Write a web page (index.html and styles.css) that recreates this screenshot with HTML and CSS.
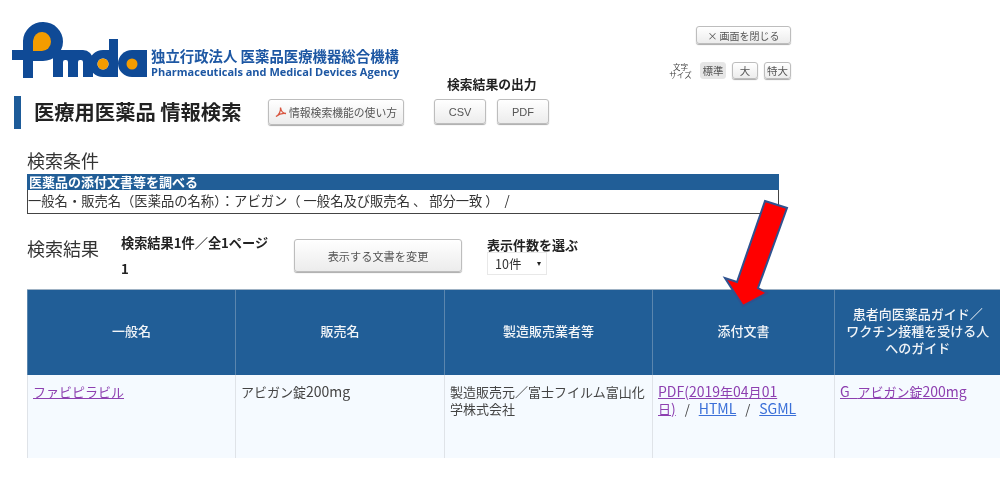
FILE: index.html
```html
<!DOCTYPE html>
<html lang="ja">
<head>
<meta charset="utf-8">
<title>医療用医薬品 情報検索</title>
<link rel="stylesheet" href="styles.css">
</head>
<body>
<div class="page">
  <header class="top">
    <div class="left">
      <div class="brand">
        <svg class="logo" viewBox="12 22 136 56" width="136" height="56" role="img" aria-label="Pmda">
          <path fill="#0f4a96" d="M12 50h11v-9a20 19.500 0 1 1 20 20h-10v17H23V60H12z"/>
          <path fill="#0f4a96" d="M53 50h30a10 10 0 0 1 10 10v17H83V62a2 2 0 0 0-2-2h-1a2 2 0 0 0-2 2v15H68V62a2 2 0 0 0-2-2h-1a2 2 0 0 0-2 2v15H53z"/>
          <path fill="#0f4a96" fill-rule="evenodd" d="M118 39v38h-15a14 13.500 0 1 1 0-27h6V39zM103 58.500a5.500 5.500 0 1 0 .01 0z"/>
          <path fill="#0f4a96" d="M132 50h15v27h-15a14 13.500 0 1 1 0-27z"/>
          <path fill="#f39c00" d="M33 50v-9a9 9.500 0 1 1 9 10h-9z"/>
          <circle cx="103" cy="64" r="5.500" fill="#f39c00"/>
          <circle cx="132" cy="64" r="5.500" fill="#f39c00"/>
        </svg>
        <div class="agency">
          <div class="agency-ja">独立行政法人 医薬品医療機器総合機構</div>
          <div class="agency-en">Pharmaceuticals and Medical Devices Agency</div>
        </div>
      </div>
      <div class="title-row">
        <h1 class="title">医療用医薬品 情報検索</h1>
        <a class="btn btn-help">
          <svg class="pdf-icon" viewBox="0 0 12 12" width="12" height="12"><path fill="none" stroke="#d8553f" stroke-width="1.300" d="M1 10.500C4 9 6 5 5.500 1.500 6 5 8 7.500 11 7.500 8 7 4 8 1 10.500z"/></svg>情報検索機能の使い方
        </a>
      </div>
    </div>
    <div class="output">
      <div class="output-label">検索結果の出力</div>
      <div class="output-btns">
        <a class="btn btn-out">CSV</a>
        <a class="btn btn-out">PDF</a>
      </div>
    </div>
    <div class="tools">
      <a class="btn btn-close">× 画面を閉じる</a>
      <div class="sizes">
        <span class="size-label">文字<br>サイズ</span>
        <a class="btn btn-size is-current">標準</a>
        <a class="btn btn-size">大</a>
        <a class="btn btn-size">特大</a>
      </div>
    </div>
  </header>

  <section class="cond">
    <h2 class="heading cond-heading">検索条件</h2>
    <div class="cond-box">
      <div class="cond-head">医薬品の添付文書等を調べる</div>
      <div class="cond-body">一般名・販売名（医薬品の名称）：アビガン（ 一般名及び販売名 、 部分一致 ） &nbsp;/</div>
    </div>
  </section>

  <section class="result-bar">
    <h2 class="heading result-heading">検索結果</h2>
    <div class="result-count">
      <div>検索結果1件／全1ページ</div>
      <div class="result-page">1</div>
    </div>
    <a class="btn btn-change">表示する文書を変更</a>
    <div class="per-page">
      <div class="per-label">表示件数を選ぶ</div>
      <div class="select">10件<span class="caret"></span></div>
    </div>
  </section>

  <table class="results">
    <colgroup>
      <col class="c1"><col class="c2"><col class="c3"><col class="c4"><col class="c5">
    </colgroup>
    <thead>
      <tr>
        <th>一般名</th>
        <th>販売名</th>
        <th>製造販売業者等</th>
        <th>添付文書</th>
        <th>患者向医薬品ガイド／<br>ワクチン接種を受ける人<br>へのガイド</th>
      </tr>
    </thead>
    <tbody>
      <tr>
        <td><a class="visited">ファビピラビル</a></td>
        <td>アビガン錠<span class="latin">200mg</span></td>
        <td>製造販売元／富士フイルム富山化学株式会社</td>
        <td><a class="visited"><span class="latin">PDF(2019</span>年<span class="latin">04</span>月<span class="latin">01</span><br>日<span class="latin">)</span></a> <span class="sep">/</span> <a class="link latin">HTML</a> <span class="sep">/</span> <a class="link latin">SGML</a></td>
        <td><a class="visited"><span class="latin">G_</span>アビガン錠<span class="latin">200mg</span></a></td>
      </tr>
    </tbody>
  </table>

  <svg class="arrow" viewBox="0 0 1000 484" width="1000" height="484" aria-hidden="true">
    <path fill="#ff0000" stroke="#2f528f" stroke-width="2" stroke-linejoin="miter" d="M765 201L787 208 758 288 767 293 743 306 725 278 737 282z"/>
  </svg>
</div>
</body>
</html>
```
FILE: styles.css
```css
* { box-sizing: border-box; }
html, body { margin: 0; padding: 0; background: #fff; }
body {
  font-family: "Noto Sans CJK JP", "Noto Sans", sans-serif;
  color: #333;
  font-size: 13px;
}
.page {
  position: relative;
  width: 1000px;
  height: 484px;
  overflow: hidden;
  filter: blur(0.35px);
}

.top { display: flex; height: 149px; padding-left: 12px; }
.left { width: 422px; padding-top: 22px; }
.brand { display: flex; align-items: flex-end; height: 56px; }
.logo { display: block; flex: none; }
.agency { margin-left: 3px; color: #1d57a3; font-weight: 700; white-space: nowrap; }
.agency-ja { font-size: 14.400px; line-height: 18px; }
.agency-en { font-family: "Open Sans", sans-serif; font-size: 11px; line-height: 14px; margin-bottom: -1px; }

.title-row { display: flex; align-items: center; margin-top: 18px; margin-left: 2px; }
.title {
  margin: 0;
  width: 254px;
  height: 33px;
  padding-left: 13px;
  border-left: 7px solid #1d5b99;
  font-size: 20.300px;
  line-height: 30px;
  font-weight: 700;
  color: #222;
  white-space: nowrap;
}
.btn {
  display: flex;
  align-items: center;
  justify-content: center;
  background: linear-gradient(#ffffff, #ececec);
  border: 1px solid #bdbdbd;
  border-radius: 3px;
  box-shadow: 0 1px 1px #aaa;
  color: #555;
  white-space: nowrap;
}
.btn-help { width: 136px; height: 26px; font-size: 10.800px; margin-top: -2px; }
.pdf-icon { margin-right: 2px; }

.output { width: 235px; padding-top: 75px; }
.output-label { margin-left: 13px; font-size: 12.800px; line-height: 18px; font-weight: 700; color: #222; }
.output-btns { display: flex; gap: 11px; margin-top: 6px; }
.btn-out { width: 52px; height: 25px; font-family: "Liberation Sans", sans-serif; font-size: 11px; }

.tools { width: 122px; padding-top: 26px; }
.btn-close { margin-left: 27px; width: 95px; height: 18px; font-size: 10px; }
.sizes { display: flex; align-items: center; margin-top: 18px; }
.size-label { width: 31px; font-size: 7.500px; line-height: 8px; text-align: center; padding-right: 8px; color: #444; }
.btn-size { height: 17px; font-size: 10.500px; margin-right: 6px; width: 26px; }
.btn-size:last-child { margin-right: 0; width: 27px; }
.btn-size.is-current { background: #e6e6e6; border-color: #e6e6e6; box-shadow: none; }

.heading { margin: 0; font-size: 18px; line-height: 22px; font-weight: 400; color: #333; }
.cond-heading { margin-bottom: 3px; }
.cond { margin-left: 27px; width: 752px; height: 87px; }
.cond-box { border: 1px solid #444; border-top-color: #215e97; }
.cond-head { height: 16px; background: #215e97; color: #fff; font-size: 13px; line-height: 15px; font-weight: 700; padding-left: 2px; margin: -1px -1px 0; }
.cond-body { height: 23px; font-size: 13.300px; line-height: 21px; white-space: pre-wrap; color: #333; }

.result-bar { display: flex; margin-left: 27px; height: 53px; }
.result-heading { width: 94px; padding-top: 1px; }
.result-count { width: 173px; font-size: 13.200px; font-weight: 700; line-height: 16px; color: #222; margin-top: -1px; }
.result-page { margin-top: 10px; }
.btn-change { width: 168px; height: 33px; margin-top: 3px; font-size: 11.200px; }
.per-page { margin-left: 25px; padding-top: 1px; }
.per-label { font-size: 13px; font-weight: 700; line-height: 15px; color: #222; }
.select {
  display: flex;
  align-items: center;
  justify-content: space-between;
  width: 60px;
  height: 23px;
  padding: 0 5px 0 7px;
  border: 1px solid #e8e8e8;
  font-size: 12.500px;
  color: #333;
}
.caret { width: 0; height: 0; border-left: 2.500px solid transparent; border-right: 2.500px solid transparent; border-top: 4px solid #222; }

.results { margin-left: 27px; width: 973px; table-layout: fixed; border-collapse: collapse; }
.c1 { width: 208px; } .c2 { width: 209px; } .c3 { width: 208px; } .c4 { width: 182px; } .c5 { width: 166px; }
.results th {
  height: 85px;
  padding: 0 6px 3px;
  background: #215e97;
  border-left: 1px solid #5b86ae;
  border-top: 1px solid #9fb2c4;
  color: #f2f5f8;
  font-size: 13px;
  line-height: 17px;
  font-weight: 500;
  text-align: center;
}
.results td {
  height: 83px;
  padding: 8px 5px 0 5px;
  background: #f5faff;
  border-left: 1px solid #dfe3e8;
  font-size: 13px;
  line-height: 17px;
  vertical-align: top;
  color: #444;
}
.latin { font-size: 14px; }
.sep { margin: 0 6px; }
.visited { color: #8d3fb0; text-decoration: underline; }
.link { color: #3a6fd8; text-decoration: underline; }

.arrow { position: absolute; left: 0; top: 0; pointer-events: none; }
```
